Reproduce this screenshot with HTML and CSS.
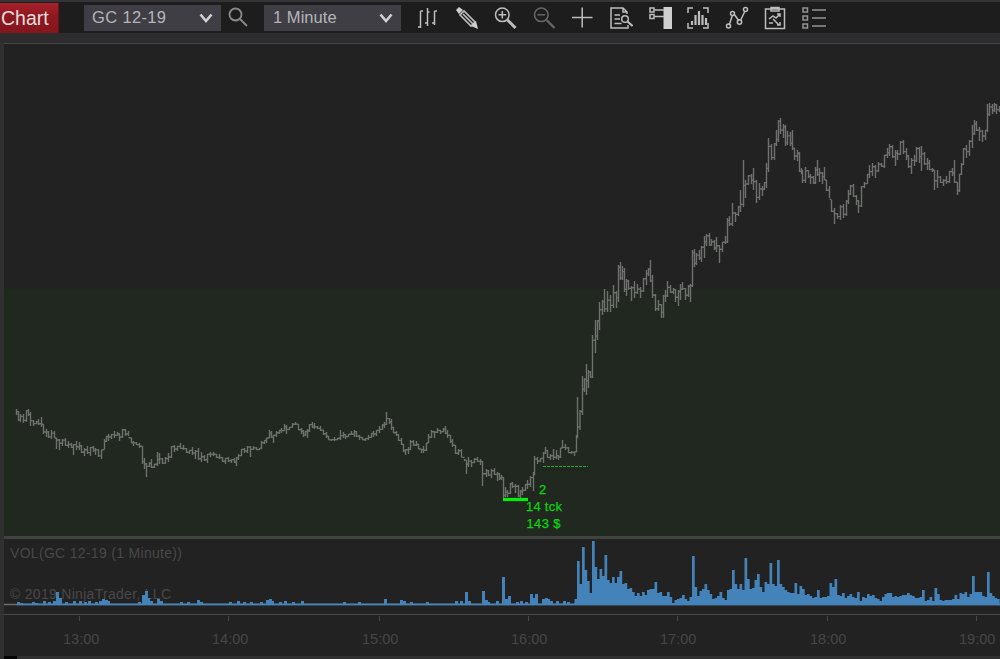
FILE: index.html
```
<!DOCTYPE html>
<html lang="en">
<head>
<meta charset="utf-8">
<title>Chart</title>
<link rel="stylesheet" href="styles.css">
</head>
<body>
<main class="window">
  <header class="toolbar">
    <div class="tab">Chart</div>
    <div class="select instrument"><span>GC 12-19</span><svg class="chevron" viewBox="0 0 14 10"><path d="M1.5 1.5 7 8 12.5 1.5"/></svg></div>
    <svg class="search" viewBox="0 0 24 24"><circle cx="8.500" cy="8.500" r="6"/><path d="m13 13 7 7"/></svg>
    <div class="select interval"><span>1 Minute</span><svg class="chevron" viewBox="0 0 14 10"><path d="M1.5 1.5 7 8 12.5 1.5"/></svg></div>
    <nav class="tools">
      <svg viewBox="0 0 24 24"><path d="M4.500 5v17M2 21h2.500M4.500 5h2.500M11.500 2v18M9 17h2.500M11.500 6h2M18.500 5v14M16 17h2.500M18.500 5h2.500" stroke-width="1.500"/></svg>
      <svg viewBox="0 0 24 24"><path class="solid" d="m1 4 3-3 4 3-4 4z"/><path d="m5 9 11 11 4-4L9 5zM8 8l10 10" stroke-width="1.7"/><path class="solid" d="m16 20 5-5 2 8z"/></svg>
      <svg viewBox="0 0 24 24"><circle cx="9.3" cy="8.8" r="6.8"/><path d="M5.5 8.8h7.6M9.3 5v7.6"/><path d="m14.5 14 8 8" stroke-width="3"/></svg>
      <svg class="dim" viewBox="0 0 24 24"><circle cx="9.3" cy="8.8" r="6.8"/><path d="M5.5 8.8h7.6"/><path d="m14.5 14 8 8" stroke-width="2.4"/></svg>
      <svg viewBox="0 0 24 24"><path d="M12.2 1.500v20M2 11.500h20.5" stroke-width="1.5"/></svg>
      <svg viewBox="0 0 24 24"><path d="M18 8V6l-4-4H2v20h17v-3M14 2v4h4M5.5 9H11M5.5 13H11M5.5 17.500h7"/><circle cx="16" cy="13" r="3.300"/><path d="m18.500 15.500 5 4.500" stroke-width="2"/></svg>
      <svg viewBox="0 0 24 24"><path class="solid" d="M15.500 1H24v22h-8.500z"/><path d="M2 2h4v4H2zM2 8.500h4v4H2zM6 4h10M6 10.500h10"/></svg>
      <svg viewBox="0 0 24 24"><path d="M2 7V2h5M17 2h5v5M2 17v5h5M17 22h5v-5"/><path d="M6 19v-4M9.500 19V9M13 19V5M16.500 19V9M20 19v-7" stroke-width="2.200"/></svg>
      <svg viewBox="0 0 24 24"><path d="M4.200 19 7.500 9M9 8l5 7M15.500 14.500 20 5"/><circle cx="3.500" cy="20" r="2"/><circle cx="7.500" cy="7.500" r="2"/><circle cx="14.500" cy="16" r="2.200"/><circle cx="20.500" cy="3.500" r="2"/></svg>
      <svg viewBox="0 0 24 24"><path d="M2.500 3h19v19.500h-19zM8 1.500h8v3.500H8z"/><path d="m6 13 4-3 3 2 4-4M14 8h3v3M6 17h4M10 13l6 6M14 19h3v-3"/></svg>
      <svg class="list" viewBox="0 0 24 24"><path d="M1 2h4.500v4H1zM1 10h4.500v4H1zM1 18h4.500v4H1z"/><path d="M10 4h14M10 12h14M10 20h14" stroke-width="1.600"/></svg>
    </nav>
  </header>
  <section class="workspace">
    <svg class="price" viewBox="4 44 996 492">
      <rect class="zone" x="4" y="288.500" width="996" height="248"/>
      <path id="bars"/>
      <path class="entry" d="M503 499.500h25"/>
      <path class="target" d="M543 466.500h45"/>
      <g class="trade">
        <text x="539" y="494" textLength="8">2</text>
        <text x="526" y="511" textLength="36">14 tck</text>
        <text x="526.500" y="528" textLength="34">143 $</text>
      </g>
    </svg>
    <svg class="volume" viewBox="4 539 996 75">
      <g class="caption">
        <text x="10" y="558" textLength="172">VOL(GC 12-19 (1 Minute))</text>
        <text x="10" y="599" textLength="161">© 2019 NinjaTrader, LLC</text>
      </g>
      <path class="base" d="M4 604.500h996"/>
      <path id="volume"/>
    </svg>
    <svg class="axis" viewBox="4 614 996 42">
      <path d="M4 614.500h996M79.500 616v5M228.500 616v5M379.500 616v5M528.500 616v5M677.500 616v5M827.500 616v5M976.500 616v5"/>
      <g>
        <text x="63" y="643.500">13:00</text><text x="212" y="643.500">14:00</text><text x="362" y="643.500">15:00</text><text x="511" y="643.500">16:00</text><text x="660" y="643.500">17:00</text><text x="810" y="643.500">18:00</text><text x="959" y="643.500">19:00</text>
      </g>
    </svg>
  </section>
  <footer class="scroll"><span></span></footer>
</main>
<script src="chart.js"></script>
</body>
</html>
```
FILE: styles.css
```
* { box-sizing: border-box; }
body { margin: 0; background: #212121; font-family: "Liberation Sans", Arial, sans-serif; overflow: hidden; }
.window { width: 1000px; height: 659px; display: flex; flex-direction: column; }
.toolbar { flex: none; height: 33px; display: flex; align-items: center; background: #1d1d1e; border-top: 2px solid #343436; }
.tab { width: 59px; height: 30px; padding-left: 1px; margin-right: 25px; background: linear-gradient(#a9202a, #8c1820 45%, #85161d); color: #e8dcdc; font-size: 19.500px; line-height: 31px; border-right: 1px solid #6f1118; }
.select { display: flex; align-items: center; justify-content: space-between; width: 137px; height: 26px; padding: 0 8px; background: #3f3e44; color: #b5b5b9; font-size: 16.500px; white-space: nowrap; }
.instrument { letter-spacing: .35px; }
.interval { padding-left: 9px; letter-spacing: .05px; }
.chevron { width: 14px; height: 10px; fill: none; stroke: #d0d0d2; stroke-width: 2.6; }
.search { width: 24px; height: 24px; margin: 0 13px 0 6px; fill: none; stroke: #8a8a8a; stroke-width: 1.8; }
.tools { display: flex; gap: 14.600px; margin-left: 15px; }
.tools svg { width: 24px; height: 24px; fill: none; stroke: #bdbdbd; stroke-width: 1.500; }
.tools .solid { fill: #cfcfcf; stroke: none; }
.tools .dim { stroke: #666; }
.tools .list { stroke: #929292; }
.workspace { flex: none; display: flex; flex-direction: column; height: 623px; padding-left: 4px; background: #222; border-top: 10px solid #2d2d2f; box-shadow: inset 4px 0 #303030, inset 0 1px #454545; }
.workspace svg { display: block; width: 996px; }
.price { height: 492px; margin-top: 1px; }
.volume { height: 75px; margin-top: 3px; box-shadow: 0 -3px #414341; }
.axis { height: 42px; }
.zone { fill: #20281f; }
#bars { fill: none; stroke: #858985; stroke-opacity: .76; stroke-width: 1.400; }
.entry { stroke: #05ef0b; stroke-width: 3.200; }
.target { stroke: #27aa2b; stroke-width: 1.200; stroke-dasharray: 3 1; }
.trade { fill: #08d60e; stroke: #08d60e; stroke-width: .25; font-size: 13px; }
.caption { fill: #484848; font-size: 14px; }
.base { stroke: #6d6d6d; stroke-width: 1.500; }
#volume { fill: #4383b9; }
.axis path { stroke: #484848; }
.axis text { fill: #464646; font-size: 14.500px; }
.scroll { height: 3px; background: #303030; }
.scroll span { display: block; width: 13px; height: 3px; margin-left: 4px; background: #050505; }
```
FILE: chart.js
```
// Price bars: x, high, low
const prices = `16,409,415 18,411,421 20,414,422 23,414,423 26,410,422 28,409,416 30,412,426 33,420,426 36,421,424 38,419,425 41,417,427 43,424,434 46,429,437 48,431,438 51,430,439 54,431,438 56,438,449 59,439,450 62,439,446 65,438,446 68,441,448 71,443,448 73,444,455 76,441,450 79,442,450 81,445,453 84,448,456 87,446,454 90,447,456 93,446,452 95,448,455 98,449,457 101,450,459 104,439,449 106,436,442 108,434,441 111,434,439 114,431,438 117,432,436 119,433,441 122,429,438 125,429,436 128,431,436 131,438,443 133,441,446 136,442,445 139,443,448 142,446,464 144,458,469 146,463,477 149,462,467 151,459,468 154,464,468 157,452,466 159,453,464 162,458,464 165,457,464 168,453,462 171,446,458 174,445,452 177,446,451 180,443,449 183,445,450 186,448,453 189,450,454 192,447,455 195,450,459 198,448,460 201,452,462 204,455,461 207,454,463 210,452,457 213,452,456 216,454,458 219,454,459 222,457,462 225,458,464 228,457,462 231,459,463 234,458,463 236,457,466 238,454,460 241,449,456 244,448,453 247,446,453 250,446,457
253,446,450 256,447,450 259,448,450 261,441,449 264,440,444 266,438,443 269,430,438 271,431,438 273,435,443 276,431,437 279,430,434 281,428,433 284,424,431 286,425,434 289,427,430 292,423,428 295,422,425 298,424,430 301,428,434 303,430,437 305,431,436 307,429,438 309,424,432 312,422,428 314,423,429 317,426,429 320,426,431 323,430,435 326,432,438 328,436,440 331,439,441 334,437,441 337,438,440 340,430,440 343,432,438 345,434,439 348,434,437 351,431,435 354,430,437 356,431,437 359,435,440 362,437,440 365,438,441 368,435,440 371,433,438 373,431,437 376,430,436 379,426,433 382,424,430 384,422,428 386,412,425 389,418,424 391,419,430 393,427,433 396,431,436 398,434,441 401,438,445 403,444,452 405,449,455 408,447,454 410,440,450 413,440,446 416,441,446 418,444,449 421,449,453 423,446,453 426,443,451 428,434,443 431,430,438 434,431,438 437,428,433 440,430,434 443,428,432 445,426,434 447,430,438 450,435,443 452,439,447 455,445,454 458,449,455 461,449,457 464,459,461 466,460,474 468,457,467 471,460,467 474,458,463 477,457,462 480,459,465 482,461,486 486,469,477 488,470,476 491,469,478 494,468,475 497,472,481 499,473,480
501,475,480 503,477,498 505,487,497 507,490,497 510,483,494 512,482,488 515,484,493 518,485,497 520,490,498 522,487,495 525,484,491 527,480,489 530,476,487 533,472,491 534,456,475 537,457,464 540,458,462 543,452,463 545,447,454 547,450,458 550,454,460 553,449,460 556,450,459 558,455,460 560,448,458 562,440,448 565,444,450 568,447,453 571,451,454 574,452,456 576,435,452 577,397,438 579.5,410,430 582,376,415 584,378,392 586,364,395 588,370,388 590,371,378 592,335,378 595,320,353 597,320,340 599,302,330 602,300,315 604,289,312 607,291,312 610,295,312 613,285,308 616,291,308 618,265,302 620,262,280 622,266,280 624,268,292 626,279,296 628,280,290 631,286,301 634,281,298 637,284,294 640,287,298 643,278,292 646,270,285 648,268,276 650,260,282 652,275,298 655,294,311 658,300,311 661,304,318 663,295,318 665,290,302 667,281,297 670,285,293 673,288,294 675,289,302 678,290,306 680,284,300 682,282,290 685,288,300 688,285,297 690,284,302 692,250,287
694,249,267 696,253,265 699,250,260 701,246,262 704,236,258 706,234,246 709,233,246 711,239,246 714,240,250 716,237,252 719,245,263 722,242,252 725,236,244 727,218,243 729,216,226 732,203,226 735,212,222 738,206,216 740,190,212 743,160,207 745,180,198 748,175,185 751,174,184 753,168,190 756,180,203 759,183,200 762,186,196 764,182,190 766,163,188 768,138,172 771,144,160 774,143,160 776,130,146 778,120,142 780,118,134 783,124,138 785,125,146 787,131,145 790,132,146 792,130,150 794,148,160 797,150,161 799,152,172 801,168,174 802,170,183 805,167,183 808,170,178 810,174,184 813,176,184 815,167,184 817,160,176 819,168,182 822,172,184 824,167,180 826,180,191 829,186,198 831,200,212 834,208,224 837,213,219 840,205,220 843,204,218
846,200,216 848,190,204 850,185,195 853,184,197 856,195,205 858,200,213 861,186,207 864,182,188 867,174,184 869,165,178 872,163,176 875,165,178 878,162,172 881,163,167 884,155,168 887,148,158 889,144,156 892,145,158 895,150,166 897,150,160 900,141,155 903,140,154 906,148,160 908,155,168 911,158,174 914,155,166 916,147,162 919,147,163 921,146,171 924,152,165 927,158,170 929,160,170 932,168,172 934,170,190 937,170,188 940,176,183 943,179,186 946,176,184 949,171,183 952,168,176 954,160,183 957,182,195 959,174,192 961,163,175 963,148,165 966,145,158 969,140,156 972,125,148 974,120,135 976,121,131 979,127,141 982,130,142 985,130,140 987,104,132 989,103,116 992,104,114 994,103,112 996,104,114 999,106,112`
  .trim().split(/\s+/).map(s => s.split(',').map(Number));

// Each bar joins the next near the top or bottom of their shared range
let d = '';
prices.forEach(([x, high, low], i) => {
  d += `M${x + .5} ${high}V${low}`;
  const next = prices[i + 1];
  if (next) {
    const top = Math.max(high, next[1]);
    const bottom = Math.min(low, next[2]);
    const join = top + (bottom - top) * [.15, .85, .3, .8, .1, .6][i % 6];
    d += `M${x + .5} ${join.toFixed(1)}H${next[0] + .5}`;
  }
});
document.getElementById('bars').setAttribute('d', d);

// Volume bars: quiet session as x,height pairs, then one height every 2.5px from x=575
const quiet = `17,2 20,1 32,2 35,1 43,3 48,2 53,3 56,12 59,6 65,2 73,3 79,3 84,2 88,3 95,2 99,3 102,5 105,4 107,3 138,2 142,9 145,13 147,6 150,3 157,5 160,3 180,2 187,2 197,4 200,2 229,2 237,3 243,2 250,2 260,2 266,4 269,5 271,3 279,2 284,3 292,2 301,3 343,2 358,2 384,5 400,4 403,3 410,2 426,2 455,3 460,3 465,12 468,3 482,13 485,4 487,2 496,3 502,27 505,5 508,8 516,2 520,3 525,2 530,10 533,6 535,10 542,5 545,6 547,5 550,3 556,3 563,3 567,2`
  .split(' ').map(s => s.split(',').map(Number));
const active = [5,43,20,57,34,23,11,63,37,25,35,28,49,24,21,27,21,27,33,20,21,15,16,12,8,11,8,12,9,14,15,15,22,11,
12,8,8,12,7,1,4,5,6,9,5,3,7,48,17,8,13,15,20,14,10,5,6,8,12,6,4,14,15,34,20,15,20,14,46,25,15,16,24,30,17,12,22,20,41,20,18,44,20,17,14,12,11,11,21,10,18,15,9,10,8,6,7,14,6,7,7,8,21,17,25,9,8,11,6,8,10,7,6,12,3,7,6,10,8,9,6,5,3,7,10,11,11,7,8,7,8,9,9,11,9,8,6,6,7,14,3,4,7,3,16,10,4,3,4,4,4,5,9,5,11,10,12,7,10,28,12,12,12,8,7,32,11,8,6,5];
let v = 'M17 603.600H1000V605.200H17z';
for (const [x, h] of quiet) v += `M${x} 605V${604 - h}h3V605z`;
active.forEach((h, i) => {
  const x = 574.5 + i * 2.5;
  v += `M${x} 605V${604 - h}h2.700V605z`;
});
document.getElementById('volume').setAttribute('d', v);
```
